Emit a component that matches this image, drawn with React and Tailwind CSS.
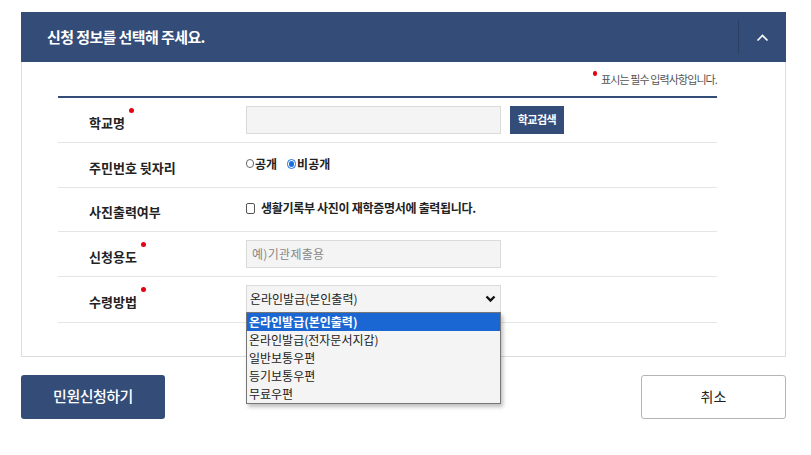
import React from 'react';

const font = { fontFamily: '"Noto Sans CJK KR", "Noto Sans", sans-serif' };

// --- Icons ---
const ChevronUp = () => (<svg width="13" height="9" viewBox="0 0 13 9" fill="none" stroke="#fff" strokeWidth="1.6"><path d="M1.5 7.5l5-5 5 5" /></svg>);
const ChevronDown = () => (<svg width="11" height="8" viewBox="0 0 11 8" fill="none" stroke="#111" strokeWidth="2.4"><path d="M1.5 1.5l4 4 4-4" /></svg>);
const Dot = () => <span className="absolute -right-[9px] -top-[5px] w-[5px] h-[5px] rounded-full bg-[#e60012]" />;

function Label({ children, required }) {
    return (
        <div className="w-[188px] pl-[31px] shrink-0 pt-[2px]">
            <span className="relative text-[13px] font-bold text-[#222]">
                {children}
                {required && <Dot />}
            </span>
        </div>
    );
}

const options = ['온라인발급(본인출력)', '온라인발급(전자문서지갑)', '일반보통우편', '등기보통우편', '무료우편'];

export default function App() {
    return (
        <div className="w-[811px] h-[455px] bg-white pt-[12px] pl-[21px] pr-[25px]" style={font}>
            <div className="h-[50px] bg-[#344c78] flex items-center justify-between">
                <h2 className="pl-[26px] text-[15px] font-bold text-white tracking-[-0.6px]">신청 정보를 선택해 주세요.</h2>
                <div className="w-[48px] h-[34px] border-l border-[#2b3f63] flex items-center justify-center">
                    <ChevronUp />
                </div>
            </div>

            <div className="border border-t-0 border-[#dcdcdc] pl-[36px] pr-[68px] pb-[33px]">
                <p className="relative text-right text-[11px] text-[#555] tracking-[-0.9px] pt-[9px] pb-[8px]">
                    <span className="relative">
                        <span className="absolute -left-[8px] top-[0px] w-[4px] h-[5px] rounded-full bg-[#e60012]" />
                        표시는 필수 입력사항입니다.
                    </span>
                </p>
                <div className="border-t-2 border-[#344c78]">
                    <div className="flex items-center h-[45px] border-b border-[#e5e5e5]">
                        <Label required>학교명</Label>
                        <div className="w-[255px] h-[28px] bg-[#f4f4f4] border border-[#dadada]" />
                        <button className="ml-[9px] w-[54px] h-[28px] bg-[#344c78] text-white text-[11px] font-bold tracking-[-0.5px]">학교검색</button>
                    </div>
                    <div className="flex items-center h-[45px] border-b border-[#e5e5e5]">
                        <Label>주민번호 뒷자리</Label>
                        <div className="flex items-center text-[12px] font-bold text-[#222] -mt-[2px]">
                            <span className="w-[8px] h-[9px] rounded-full border border-[#666] mr-[1px]" />
                            공개
                            <span className="ml-[10px] w-[9px] h-[10px] rounded-full border border-[#1a6fe0] flex items-center justify-center mr-[1px]">
                                <span className="w-[5px] h-[6px] rounded-full bg-[#1a6fe0]" />
                            </span>
                            비공개
                        </div>
                    </div>
                    <div className="flex items-center h-[44px] border-b border-[#e5e5e5]">
                        <Label>사진출력여부</Label>
                        <div className="flex items-center text-[12px] font-bold text-[#222] -mt-[2px] tracking-[-0.3px]">
                            <span className="w-[9px] h-[11px] rounded-[2px] border border-[#555] mr-[6px]" />
                            생활기록부 사진이 재학증명서에 출력됩니다.
                        </div>
                    </div>
                    <div className="flex items-center h-[45px] border-b border-[#e5e5e5]">
                        <Label required>신청용도</Label>
                        <div className="w-[255px] h-[28px] bg-[#f4f4f4] border border-[#dadada] flex items-center pl-[5px] text-[12px] text-[#888] tracking-[0.3px]">예)기관제출용</div>
                    </div>
                    <div className="flex items-center h-[46px] border-b border-[#e5e5e5]">
                        <Label required>수령방법</Label>
                        <div className="relative">
                            <div className="w-[255px] h-[28px] bg-[#f4f4f4] border border-[#dadada] flex items-center justify-between pl-[3px] pr-[4px] text-[12px] text-[#222]">
                                <span>온라인발급(본인출력)</span>
                                <ChevronDown />
                            </div>
                            <ul className="absolute left-0 top-[27px] w-[255px] bg-[#f4f4f4] border border-[#767676] shadow-[2px_3px_4px_rgba(0,0,0,0.25)] z-10 text-[12px] text-[#222]">
                                {options.map((o, i) => (
                                    <li key={o} className={`h-[18px] leading-[18px] pl-[2px] ${i === 0 ? 'bg-[#1a66d2] text-white font-bold' : ''}`}>{o}</li>
                                ))}
                            </ul>
                        </div>
                    </div>
                </div>
            </div>

            <div className="flex justify-between mt-[18px]">
                <button className="w-[144px] h-[44px] bg-[#344c78] rounded-[3px] text-white text-[15px] font-medium tracking-[-0.5px]">민원신청하기</button>
                <button className="w-[145px] h-[44px] bg-white border border-[#b5b5b5] rounded-[3px] text-[#222] text-[14px]">취소</button>
            </div>
        </div>
    );
}
